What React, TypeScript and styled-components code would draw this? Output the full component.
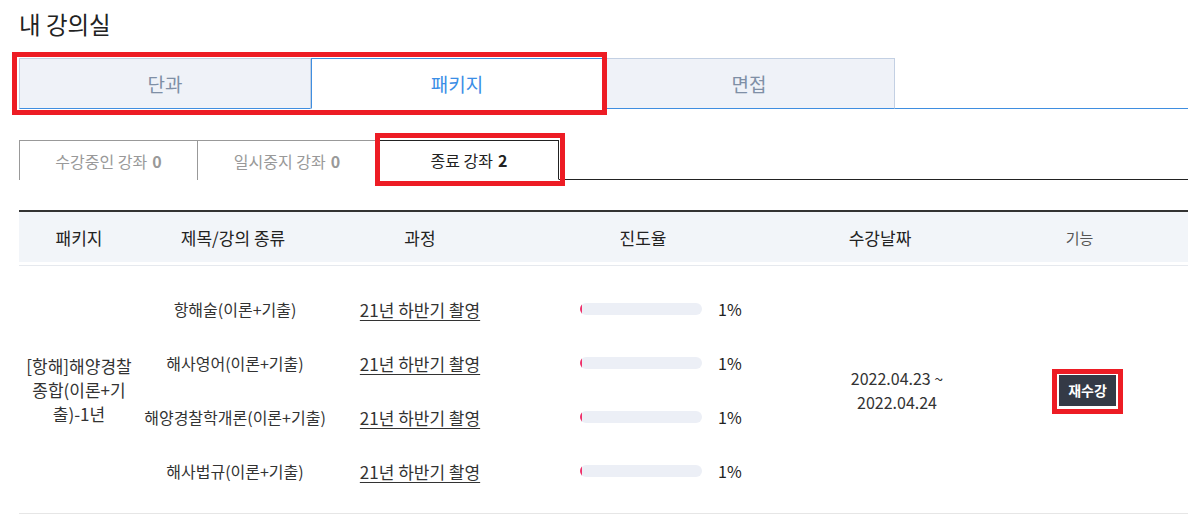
import styled, { createGlobalStyle } from "styled-components";

const GlobalStyle = createGlobalStyle`
  html, body {
    margin: 0;
    padding: 0;
    background: #fff;
  }
  body {
    font-family: "Noto Sans CJK KR", "Noto Sans", sans-serif;
    color: #222;
  }
`;

interface Lecture {
  title: string;
  course: string;
  progress: number;
}

const lectures: Lecture[] = [
  { title: "항해술(이론+기출)", course: "21년 하반기 촬영", progress: 1 },
  { title: "해사영어(이론+기출)", course: "21년 하반기 촬영", progress: 1 },
  { title: "해양경찰학개론(이론+기출)", course: "21년 하반기 촬영", progress: 1 },
  { title: "해사법규(이론+기출)", course: "21년 하반기 촬영", progress: 1 },
];

const Page = styled.div`
  padding: 8px 13px 0 19px;
`;

const Title = styled.h1`
  margin: 0;
  font-size: 23.5px;
  font-weight: 400;
  line-height: 32px;
  color: #222;
`;

// 빨간 강조 박스 (스크린샷 주석)
const Marked = styled.div<{ $inset: string }>`
  position: relative;
  display: flex;

  &::after {
    content: "";
    position: absolute;
    inset: ${(p) => p.$inset};
    border: 5px solid #ed1c24;
    pointer-events: none;
  }
`;

const MainTabs = styled.div`
  display: flex;
  margin-top: 18px;
  border-bottom: 1px solid #3f8ee0;
`;

const MainTab = styled.div<{ $active?: boolean }>`
  width: 292px;
  height: 51px;
  box-sizing: border-box;
  display: flex;
  align-items: center;
  justify-content: center;
  font-size: 19px;
  margin-bottom: -1px;
  background: ${(p) => (p.$active ? "#fff" : "#eff2f8")};
  color: ${(p) => (p.$active ? "#3a8ee6" : "#7f8fa6")};
  border: 1px solid ${(p) => (p.$active ? "#3f8ee0" : "#c3d0e3")};
  border-bottom-color: ${(p) => (p.$active ? "#fff" : "#3f8ee0")};
  & + & {
    border-left: ${(p) => (p.$active ? "1px solid #3f8ee0" : "none")};
  }
`;

const SubTabs = styled.div`
  display: flex;
  margin-top: 31px;
  border-bottom: 1px solid #222;
`;

const SubTab = styled.div<{ $active?: boolean }>`
  width: ${(p) => (p.$active ? "180px" : "179px")};
  height: 40px;
  box-sizing: border-box;
  display: flex;
  align-items: center;
  justify-content: center;
  font-size: 16px;
  margin-bottom: -1px;
  background: #fff;
  color: ${(p) => (p.$active ? "#222" : "#999")};
  border: 1px solid ${(p) => (p.$active ? "#222" : "#999")};
  border-bottom: ${(p) => (p.$active ? "1px solid #fff" : "none")};
  & + & {
    border-left: none;
  }

  b {
    margin-left: 5px;
    font-weight: 700;
  }
`;

const TabGap = styled.div`
  width: 2px;
`;

const Table = styled.div`
  margin-top: 30px;
  border-top: 2px solid #333;
`;

const HeadRow = styled.div`
  display: grid;
  grid-template-columns: 120px 188px 186px 260px 214px 1fr;
  height: 50px;
  background: #f2f5f9;
  margin-bottom: 3px;
`;

const HeadCell = styled.div<{ $small?: boolean }>`
  display: flex;
  align-items: center;
  justify-content: center;
  font-size: ${(p) => (p.$small ? "15px" : "17px")};
  color: ${(p) => (p.$small ? "#555" : "#222")};
  padding-right: ${(p) => (p.$small ? "16px" : "0")};
`;

const Body = styled.div`
  display: flex;
  border-top: 1px solid #e6e9ee;
  border-bottom: 1px solid #e6e6e6;
  padding: 16px 0 15px;
`;

const PackageCell = styled.div`
  width: 120px;
  display: flex;
  align-items: center;
  justify-content: center;
  text-align: center;
  font-size: 17px;
  line-height: 24px;
  color: #333;
  padding: 0 2px;
  box-sizing: border-box;
`;

const LectureList = styled.div`
  width: 634px;
  display: flex;
  flex-direction: column;
`;

const LectureRow = styled.div`
  display: grid;
  grid-template-columns: 188px 186px 260px;
  height: 54px;
  align-items: center;
`;

const LectureTitle = styled.div`
  text-align: center;
  font-size: 16px;
  color: #333;
  white-space: nowrap;
  padding-left: 4px;
`;

const CourseLink = styled.a`
  text-align: center;
  font-size: 17px;
  color: #333;
  text-decoration: underline;
  text-underline-offset: 3px;
  cursor: pointer;
`;

const Progress = styled.div`
  display: flex;
  align-items: center;
  gap: 16px;
  padding-left: 67px;
`;

const Bar = styled.div`
  width: 122px;
  height: 12px;
  border-radius: 6px;
  background: #eceff6;
  overflow: hidden;
`;

const BarFill = styled.div`
  height: 100%;
  min-width: 2px;
  background: #f0306a;
`;

const Percent = styled.span`
  font-size: 16px;
  color: #222;
`;

const DateCell = styled.div`
  width: 214px;
  display: flex;
  align-items: center;
  justify-content: center;
  text-align: center;
  font-size: 16px;
  line-height: 24px;
  color: #333;
  padding-left: 34px;
  box-sizing: border-box;
`;

const ActionCell = styled.div`
  flex: 1;
  display: flex;
  align-items: center;
  justify-content: center;
`;

const RetakeButton = styled.button`
  width: 57px;
  height: 31px;
  border: none;
  background: #343a46;
  color: #fff;
  font-family: inherit;
  font-size: 14px;
  font-weight: 700;
  cursor: pointer;
`;

function App() {
  return (
    <>
      <GlobalStyle />
      <Page>
        <Title>내 강의실</Title>

        <MainTabs>
          <Marked $inset="-6px -4px -7px -7px">
            <MainTab>단과</MainTab>
            <MainTab $active>패키지</MainTab>
          </Marked>
          <MainTab>면접</MainTab>
        </MainTabs>

        <SubTabs>
          <SubTab>
            수강중인 강좌<b>0</b>
          </SubTab>
          <SubTab>
            일시중지 강좌<b>0</b>
          </SubTab>
          <TabGap />
          <Marked $inset="-7px -6px -7px -4px">
            <SubTab $active>
              종료 강좌<b>2</b>
            </SubTab>
          </Marked>
        </SubTabs>

        <Table>
          <HeadRow>
            <HeadCell>패키지</HeadCell>
            <HeadCell>제목/강의 종류</HeadCell>
            <HeadCell>과정</HeadCell>
            <HeadCell>진도율</HeadCell>
            <HeadCell>수강날짜</HeadCell>
            <HeadCell $small>기능</HeadCell>
          </HeadRow>

          <Body>
            <PackageCell>[항해]해양경찰 종합(이론+기출)-1년</PackageCell>
            <LectureList>
              {lectures.map((lec) => (
                <LectureRow key={lec.title}>
                  <LectureTitle>{lec.title}</LectureTitle>
                  <CourseLink>{lec.course}</CourseLink>
                  <Progress>
                    <Bar>
                      <BarFill style={{ width: `${lec.progress}%` }} />
                    </Bar>
                    <Percent>{lec.progress}%</Percent>
                  </Progress>
                </LectureRow>
              ))}
            </LectureList>
            <DateCell>
              2022.04.23 ~
              <br />
              2022.04.24
            </DateCell>
            <ActionCell>
              <Marked $inset="-6px -7px -8px -7px">
                <RetakeButton>재수강</RetakeButton>
              </Marked>
            </ActionCell>
          </Body>
        </Table>
      </Page>
    </>
  );
}

export default App;
